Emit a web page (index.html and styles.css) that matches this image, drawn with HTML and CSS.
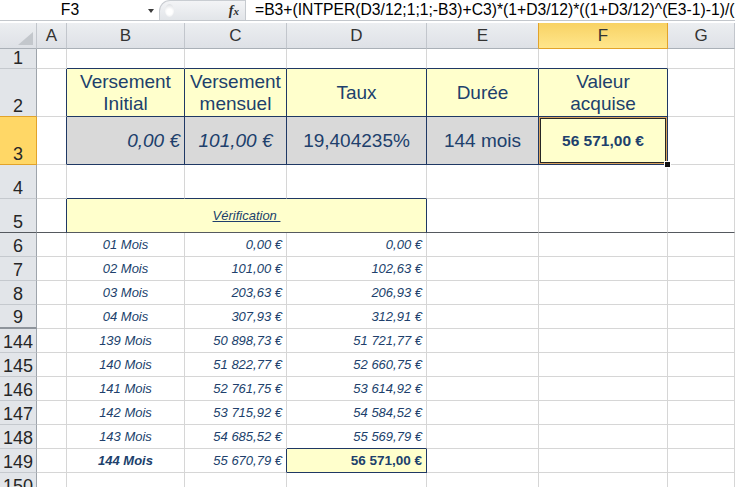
FILE: index.html
```html
<!DOCTYPE html>
<html lang="fr">
<head>
<meta charset="utf-8">
<title>Valeur acquise</title>
<link rel="stylesheet" href="styles.css">
</head>
<body>
<div class="fbar">
  <div class="namebox"><span class="ref">F3</span><span class="caret"></span></div>
  <div class="fxzone"><span class="knob"></span><span class="fx">f<span class="fxx">x</span></span></div>
  <div class="formula">=B3+(INTPER(D3/12;1;1;-B3)+C3)*(1+D3/12)*((1+D3/12)^(E3-1)-1)/(</div>
</div>
<div class="sheet">
  <div class="row hdr">
    <div class="c ch corner"><svg width="15" height="13" viewBox="0 0 15 13"><polygon points="15,0 15,13 0,13" fill="#c3c7cc"/></svg></div>
    <div class="c ch">A</div>
    <div class="c ch">B</div>
    <div class="c ch">C</div>
    <div class="c ch">D</div>
    <div class="c ch pre">E</div>
    <div class="c ch selh">F</div>
    <div class="c ch">G</div>
  </div>

  <div class="row h20">
    <div class="c rh">1</div>
    <div class="c"></div>
    <div class="c B"></div>
    <div class="c B"></div>
    <div class="c B"></div>
    <div class="c B"></div>
    <div class="c B"></div>
    <div class="c"></div>
  </div>

  <div class="row h48">
    <div class="c rh preb">2</div>
    <div class="c R"></div>
    <div class="c hd yl R B">Versement<br>Initial</div>
    <div class="c hd yl R B">Versement<br>mensuel</div>
    <div class="c hd yl R B">Taux</div>
    <div class="c hd yl R B">Durée</div>
    <div class="c hd yl R B">Valeur<br>acquise</div>
    <div class="c"></div>
  </div>

  <div class="row h48">
    <div class="c rh selr">3</div>
    <div class="c R"></div>
    <div class="c gy R B big it r">0,00 €</div>
    <div class="c gy R B big it ctr">101,00 €</div>
    <div class="c gy R B big ctr">19,404235%</div>
    <div class="c gy R B big ctr">144 mois</div>
    <div class="c yl R B sel res ctr">56 571,00 €<span class="handle"></span></div>
    <div class="c"></div>
  </div>

  <div class="row h34">
    <div class="c rh">4</div>
    <div class="c"></div>
    <div class="c B"></div>
    <div class="c B"></div>
    <div class="c B"></div>
    <div class="c"></div>
    <div class="c"></div>
    <div class="c"></div>
  </div>

  <div class="row h34">
    <div class="c rh frz">5</div>
    <div class="c R frz"></div>
    <div class="c span3 yl R frz ctr d"><span class="ul">Vérification&nbsp;</span></div>
    <div class="c frz"></div>
    <div class="c frz"></div>
    <div class="c frz"></div>
  </div>

  <div class="row"><div class="c rh">6</div><div class="c"></div><div class="c d ctr">01 Mois</div><div class="c d r">0,00 €</div><div class="c d r">0,00 €</div><div class="c"></div><div class="c"></div><div class="c"></div></div>
  <div class="row"><div class="c rh">7</div><div class="c"></div><div class="c d ctr">02 Mois</div><div class="c d r">101,00 €</div><div class="c d r">102,63 €</div><div class="c"></div><div class="c"></div><div class="c"></div></div>
  <div class="row"><div class="c rh">8</div><div class="c"></div><div class="c d ctr">03 Mois</div><div class="c d r">203,63 €</div><div class="c d r">206,93 €</div><div class="c"></div><div class="c"></div><div class="c"></div></div>
  <div class="row"><div class="c rh hid">9</div><div class="c"></div><div class="c d ctr">04 Mois</div><div class="c d r">307,93 €</div><div class="c d r">312,91 €</div><div class="c"></div><div class="c"></div><div class="c"></div></div>
  <div class="row"><div class="c rh">144</div><div class="c"></div><div class="c d ctr">139 Mois</div><div class="c d r">50 898,73 €</div><div class="c d r">51 721,77 €</div><div class="c"></div><div class="c"></div><div class="c"></div></div>
  <div class="row"><div class="c rh">145</div><div class="c"></div><div class="c d ctr">140 Mois</div><div class="c d r">51 822,77 €</div><div class="c d r">52 660,75 €</div><div class="c"></div><div class="c"></div><div class="c"></div></div>
  <div class="row"><div class="c rh">146</div><div class="c"></div><div class="c d ctr">141 Mois</div><div class="c d r">52 761,75 €</div><div class="c d r">53 614,92 €</div><div class="c"></div><div class="c"></div><div class="c"></div></div>
  <div class="row"><div class="c rh">147</div><div class="c"></div><div class="c d ctr">142 Mois</div><div class="c d r">53 715,92 €</div><div class="c d r">54 584,52 €</div><div class="c"></div><div class="c"></div><div class="c"></div></div>
  <div class="row"><div class="c rh">148</div><div class="c"></div><div class="c d ctr">143 Mois</div><div class="c d r">54 685,52 €</div><div class="c d r B">55 569,79 €</div><div class="c"></div><div class="c"></div><div class="c"></div></div>
  <div class="row"><div class="c rh">149</div><div class="c"></div><div class="c d ctr bold">144 Mois</div><div class="c d r R">55 670,79 €</div><div class="c d r yl R B bold up">56 571,00 €</div><div class="c"></div><div class="c"></div><div class="c"></div></div>
  <div class="row"><div class="c rh">150</div><div class="c"></div><div class="c"></div><div class="c"></div><div class="c"></div><div class="c"></div><div class="c"></div><div class="c"></div></div>
</div>
</body>
</html>
```
FILE: styles.css
```css
html, body {
  margin: 0;
  padding: 0;
  overflow: hidden;
  background: #ffffff;
}
body {
  width: 735px;
  height: 487px;
  font-family: "Liberation Sans", Arial, sans-serif;
  color: #000;
}

/* formula bar */
.fbar {
  display: flex;
  height: 21px;
  box-sizing: border-box;
  border-bottom: 1px solid #c3c7cc;
  margin-bottom: 2px;
}
.namebox {
  width: 159px;
  display: flex;
  align-items: center;
  font-size: 15.7px;
}
.ref {
  width: 140px;
  text-align: center;
}
.caret {
  width: 0;
  height: 0;
  margin-left: 8px;
  margin-top: 2px;
  border-left: 3.5px solid transparent;
  border-right: 3.5px solid transparent;
  border-top: 4px solid #3c3c3c;
}
.fxzone {
  width: 86px;
  box-sizing: border-box;
  display: flex;
  align-items: center;
  justify-content: space-between;
  padding: 0 6px 0 5px;
  background: linear-gradient(#f3f4f6, #e2e5e9);
  border: 1px solid #c9cdd2;
  border-right: none;
  border-bottom: none;
  border-radius: 11px 0 0 0;
}
.knob {
  width: 9px;
  height: 13px;
  border-radius: 50%;
  background: radial-gradient(circle at 50% 60%, #ffffff 30%, #d5d8dc 100%);
}
.fx {
  font-family: "Liberation Serif", "Times New Roman", serif;
  font-style: italic;
  font-weight: bold;
  font-size: 14px;
  color: #2e2e2e;
}
.fxx {
  font-size: 11px;
}
.formula {
  flex: 1;
  border-left: 1px solid #c6cacf;
  padding-left: 9px;
  font-size: 15.7px;
  line-height: 20px;
  white-space: nowrap;
  overflow: hidden;
}

/* sheet grid */
.row {
  display: grid;
  grid-template-columns: 37px 30px 118px 102px 140px 112px 129px 67px;
  height: 24px;
}
.hdr { height: 26px; }
.h20 { height: 20px; }
.h48 { height: 48px; }
.h34 { height: 34px; }

.c {
  box-sizing: border-box;
  border-right: 1px solid #d6d6d6;
  border-bottom: 1px solid #d6d6d6;
  display: flex;
  align-items: center;
  padding: 0 4px;
  white-space: nowrap;
  overflow: hidden;
  color: #203f6c;
}
.span3 { grid-column: span 3; }

/* headers */
.ch {
  background: linear-gradient(#eceef1, #dee1e6);
  border-right-color: #c2c6cc;
  border-bottom-color: #aab0b7;
  justify-content: center;
  font-size: 17px;
  color: #333;
  padding: 0;
}
.corner {
  justify-content: flex-end;
  align-items: flex-end;
  padding: 0 3px 3px 0;
}
.ch.pre { border-right-color: #e2a32a; }
.selh {
  background: linear-gradient(#f8d264, #ffe68c);
  border-right-color: #e2a32a;
  border-bottom-color: #e2a32a;
}
.rh {
  background: #e2e5e9;
  border-right-color: #9ea4ab;
  border-bottom-color: #c5c9ce;
  justify-content: center;
  align-items: flex-end;
  font-size: 18px;
  line-height: 19px;
  color: #262626;
  padding: 0;
}
.rh.preb { border-bottom-color: #e2a32a; }
.selr {
  background: #ffd766;
  border-right-color: #e2a32a;
  border-bottom-color: #e2a32a;
}
.rh.hid { border-bottom: 2px solid #8e949b; }

/* cell borders & fills */
.R { border-right-color: #1f3864; }
.B { border-bottom-color: #1f3864; }
.frz { border-bottom-color: #55595f; }
.yl { background: #ffffcc; }
.gy { background: #d9d9d9; }

/* text */
.hd {
  font-size: 19px;
  line-height: 22px;
  text-align: center;
  justify-content: center;
  white-space: normal;
}
.big { font-size: 19px; }
.it { font-style: italic; }
.r { justify-content: flex-end; }
.ctr { justify-content: center; }
.d { font-size: 13px; font-style: italic; }
.bold { font-weight: bold; }
.up { font-style: normal; font-size: 13.5px; }
.res { font-weight: bold; font-size: 15.5px; }
.ul { text-decoration: underline; }

/* selection */
.sel {
  position: relative;
  overflow: visible;
  box-shadow: inset 0 0 0 1px #d9a25e, inset 0 0 0 2px #262626;
  z-index: 1;
}
.handle {
  position: absolute;
  right: -4px;
  bottom: -4px;
  width: 5px;
  height: 5px;
  background: #111;
  border: 1px solid #fff;
  z-index: 2;
}
```
